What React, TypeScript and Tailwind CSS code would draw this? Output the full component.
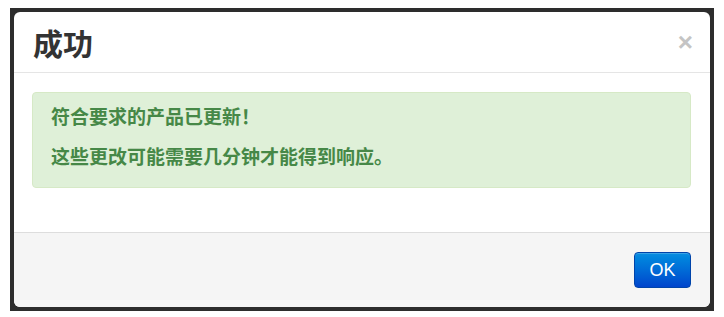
export default function App() {
  return (
    <div className="min-h-screen bg-white pt-[8px] pl-[10px]">
      <div
        className="w-[704px] h-[303px] bg-[#2d2d2d] pt-[4px] pl-[4px] pr-[4px] pb-[4px]"
        style={{ fontFamily: '"Noto Sans CJK SC", "Liberation Sans", sans-serif' }}
      >
        <div className="h-full bg-white rounded-[6px] overflow-hidden flex flex-col">
          {/* Header */}
          <div className="h-[61px] border-b border-[#e5e5e5] flex items-center justify-between pl-[19px] pr-[17px]">
            <h3 className="text-[30px] leading-none font-bold text-[#333]">成功</h3>
            <button
              className="text-[26px] leading-none font-bold text-[#c4c4c4]"
              style={{ fontFamily: '"Liberation Sans", sans-serif' }}
            >
              ×
            </button>
          </div>

          {/* Body */}
          <div className="h-[159px] pt-[19px] px-[18px] pr-[19px]">
            <div className="h-[96px] bg-[#dff0d8] border border-[#d6e9c6] rounded-[4px] pt-[11px] pl-[18px] flex flex-col gap-[16px] text-[#468847] text-[19px] leading-[24px] font-bold">
              <p>符合要求的产品已更新！</p>
              <p>这些更改可能需要几分钟才能得到响应。</p>
            </div>
          </div>

          {/* Footer */}
          <div className="flex-1 bg-[#f5f5f5] border-t border-[#dddddd] flex justify-end items-start pt-[19px] pr-[19px]">
            <button
              className="w-[57px] h-[36px] rounded-[4px] border border-[#0044aa] text-white text-[18px] bg-gradient-to-b from-[#0a8ee0] to-[#0044cc] shadow-[inset_0_1px_0_rgba(255,255,255,0.2)]"
              style={{ fontFamily: '"Liberation Sans", sans-serif' }}
            >
              OK
            </button>
          </div>
        </div>
      </div>
    </div>
  );
}
